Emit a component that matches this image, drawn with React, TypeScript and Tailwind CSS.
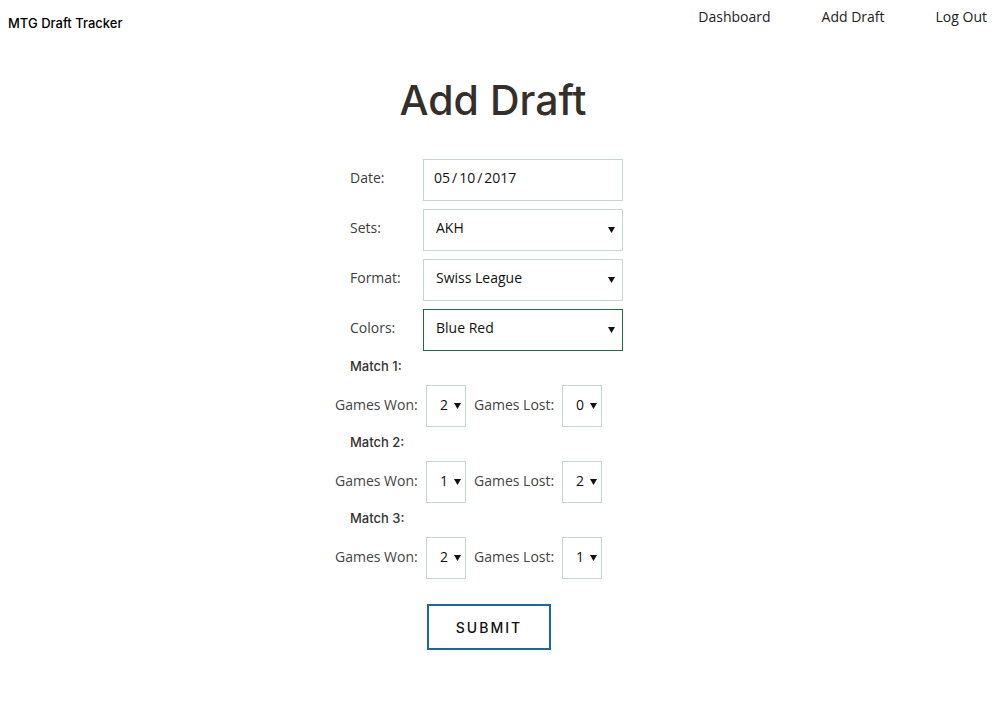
import { ReactNode } from "react";

const FONT = "font-['Open_Sans',_'Noto_Sans',_sans-serif]";
const DISPLAY = "font-['Inter',_'Open_Sans',_sans-serif]";

const MATCHES = [
  { won: "2", lost: "0" },
  { won: "1", lost: "2" },
  { won: "2", lost: "1" },
];

function Caret() {
  return (
    <svg width="7" height="6" viewBox="0 0 7 6" className="shrink-0">
      <polygon points="0,0 7,0 3.5,6" fill="#111" />
    </svg>
  );
}

function Row({ label, children }: { label: string; children: ReactNode }) {
  return (
    <div className="flex items-center">
      <span className="w-[88px] shrink-0 pb-[6px] pl-[15px] text-[14px] text-[#3d3d3d]">{label}</span>
      {children}
    </div>
  );
}

function FakeSelect({ value, focused }: { value: string; focused?: boolean }) {
  return (
    <div
      className={
        "flex h-[42px] w-[200px] items-center justify-between border pl-[12px] pr-[7px] text-[14px] text-[#111] " +
        (focused ? "border-[#1d6b44]" : "border-[#c6d6d0]")
      }
    >
      <span className="pb-[6px]">{value}</span>
      <Caret />
    </div>
  );
}

function SmallSelect({ value }: { value: string }) {
  return (
    <div className="flex h-[42px] w-[40px] shrink-0 items-center gap-[6px] border border-[#c6d6d0] pl-[13px] text-[14px] text-[#111]">
      <span className="pb-[4px]">{value}</span>
      <Caret />
    </div>
  );
}

export default function App() {
  return (
    <div className={`${FONT} min-h-[722px] w-full bg-white`}>
      {/* Nav */}
      <div className="flex items-start justify-between">
        <span className={`${DISPLAY} mt-[14px] ml-[8px] text-[13px] leading-[18px] font-medium text-black`}>
          MTG Draft Tracker
        </span>
        <div className="mt-[8px] mr-[19px] flex gap-[51px] text-[14px] leading-[18px] text-[#222]">
          <span>Dashboard</span>
          <span>Add Draft</span>
          <span>Log Out</span>
        </div>
      </div>

      {/* Heading */}
      <h1 className={`${DISPLAY} mt-[44px] pr-[20px] text-center text-[41px] leading-[48px] font-medium text-[#342f2b]`}>
        Add Draft
      </h1>

      {/* Form */}
      <div className="mx-auto mt-[35px] flex w-[336px] flex-col">
        <div className="flex flex-col gap-[8px]">
          <Row label="Date:">
            <div className="flex h-[42px] w-[200px] items-center border border-[#c6d6d0] pl-[10px] text-[14px] text-[#111]">
              <span className="flex pb-[6px]">
                <span>05</span>
                <span className="px-[2px]">/</span>
                <span>10</span>
                <span className="px-[2px]">/</span>
                <span>2017</span>
              </span>
            </div>
          </Row>
          <Row label="Sets:">
            <FakeSelect value="AKH" />
          </Row>
          <Row label="Format:">
            <FakeSelect value="Swiss League" />
          </Row>
          <Row label="Colors:">
            <FakeSelect value="Blue Red" focused />
          </Row>
        </div>

        {MATCHES.map((m, i) => (
          <div key={i} className="mt-[5px] flex flex-col">
            <span className={`${DISPLAY} h-[20px] pl-[15px] text-[13px] leading-[20px] font-medium text-[#333]`}>
              Match {i + 1}:
            </span>
            <div className="mt-[9px] flex items-center whitespace-nowrap text-[14px] text-[#444]">
              <span className="w-[83px] shrink-0 pb-[4px]">Games Won:</span>
              <span className="ml-[8px]">
                <SmallSelect value={m.won} />
              </span>
              <span className="ml-[8px] w-[80px] shrink-0 pb-[4px]">Games Lost:</span>
              <span className="ml-[8px]">
                <SmallSelect value={m.lost} />
              </span>
            </div>
          </div>
        ))}

        <button className={`${DISPLAY} mt-[25px] ml-[92px] h-[46px] w-[124px] border-2 border-[#1b67a6] text-[14px] font-medium tracking-[2px] text-[#111]`}>
          SUBMIT
        </button>
      </div>
    </div>
  );
}
